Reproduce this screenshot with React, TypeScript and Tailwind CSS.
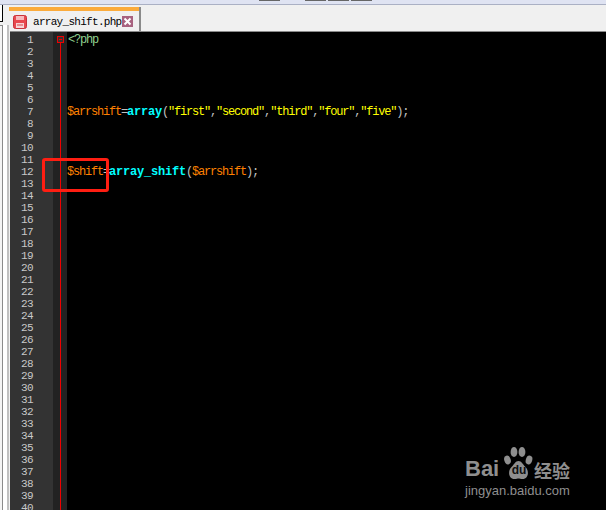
const mono = "font-['Liberation_Mono','DejaVu_Sans_Mono',monospace]";

const lineNumbers = Array.from({ length: 40 }, (_, i) => i + 1);

function TabIcon() {
  return (
    <svg width="14" height="14" viewBox="0 0 14 14" className="shrink-0">
      <rect x="0.5" y="0.5" width="13" height="13" rx="2" fill="#e8494f" stroke="#c8323a" />
      <rect x="3" y="1" width="8" height="4" fill="#f6b9bb" />
      <rect x="3" y="8" width="8" height="5" fill="#f6d5d6" />
      <rect x="4" y="9.500" width="6" height="1" fill="#d9444a" />
    </svg>
  );
}

function CloseIcon() {
  return (
    <svg width="11" height="11" viewBox="0 0 11 11" className="shrink-0">
      <rect width="11" height="11" fill="#a8627f" />
      <path d="M2.500 2.500l6 6M8.500 2.500l-6 6" stroke="#ffffff" strokeWidth="2" />
    </svg>
  );
}

function PawLogo() {
  return (
    <svg width="30" height="36" viewBox="0 0 30 36" className="absolute left-[40px] top-[1px]">
      <ellipse cx="3.500" cy="15" rx="3.200" ry="4.500" fill="#8f8f8f" transform="rotate(-18 3.500 15)" />
      <ellipse cx="10" cy="7" rx="3.400" ry="5" fill="#8f8f8f" />
      <ellipse cx="18" cy="7" rx="3.400" ry="5" fill="#8f8f8f" />
      <ellipse cx="25" cy="15" rx="3.200" ry="4.500" fill="#8f8f8f" transform="rotate(18 25 15)" />
      <path d="M14.500 16c-3 0-4 3-7 6-4 4-3 12 3 12 2 0 3-.6 4-.6s2 .6 4 .6c6 0 7-8 3-12-3-3-4-6-7-6z" fill="#8f8f8f" />
    </svg>
  );
}

function Watermark() {
  return (
    <div className="absolute left-[464px] top-[444px] w-[142px] font-['Liberation_Sans',sans-serif] text-[#8f8f8f]">
      <PawLogo />
      <div className="flex h-[36px] items-end">
        <span className="w-[43px] pl-[1px] text-[22px] leading-[22px] font-bold">Bai</span>
        <span className="relative w-[24px] pb-[4px] text-center text-[12px] leading-[12px] font-bold text-[#111111]">du</span>
        <span className="ml-[3px] font-['Noto_Sans_CJK_SC',sans-serif] text-[18px] leading-[20px] font-bold">经验</span>
      </div>
      <div className="mt-[3px] pl-[1px] text-[13px] leading-[15px]">jingyan.baidu.com</div>
    </div>
  );
}

export default function App() {
  return (
    <div className="relative flex h-[510px] w-[606px] flex-col overflow-hidden bg-[#f0f0f0]">
      <div className="relative h-[5px] shrink-0 border-b border-[#aab0c4] bg-[#dfe3f2]">
        <div className="absolute left-[259px] top-0 h-[1px] w-[21px] bg-[#666666]" />
        <div className="absolute left-[305px] top-0 h-[1px] w-[21px] bg-[#666666]" />
        <div className="absolute left-[328px] top-0 h-[1px] w-[21px] bg-[#666666]" />
        <div className="absolute left-[351px] top-0 h-[1px] w-[21px] bg-[#666666]" />
      </div>

      <div className="flex min-h-0 flex-1">
        <div className="flex w-[10px] shrink-0 flex-col">
          <div className="h-[17px] w-[3px] border-r border-b border-black bg-white" />
          <div className="mt-[3px] flex min-h-0 flex-1">
            <div className="w-[3px] border-t border-r border-[#8a8a8a] bg-[#f4f4f4]" />
            <div className="w-[4px] bg-white" />
            <div className="w-[2px] bg-[#c0c0c0]" />
            <div className="w-[1px] bg-[#f0f0f0]" />
          </div>
        </div>

        <div className="flex min-w-0 flex-1 flex-col">
          <div className="flex h-[26px] shrink-0 items-end">
            <div className="flex h-[24px] w-[131px] flex-col border-r-2 border-[#8a8a8a] bg-[#f0f0f0]">
              <div className="-ml-[1px] h-[4px] bg-[#fbab3c]" />
              <div className="flex flex-1 items-center pl-[3px] pt-[1px]">
                <TabIcon />
                <span className={`ml-[6px] w-[89px] text-[11px] leading-[14px] tracking-[-0.7px] text-black ${mono}`}>array_shift.php</span>
                <CloseIcon />
              </div>
            </div>
          </div>

          <div className="h-[1px] shrink-0 bg-[#8a8a8a]" />
          <div className="flex min-h-0 flex-1 bg-black">
            <div className={`w-[43px] shrink-0 bg-[#333333] pt-[2px] text-right text-[11px] leading-[12px] tracking-[-0.6px] text-[#c8c8c8] ${mono}`}>
              {lineNumbers.map((n) => (
                <div key={n} className="pr-[20px]">{n}</div>
              ))}
            </div>
            <div className="relative w-[14px] shrink-0 bg-[#222222]">
              <div className="absolute left-[7px] top-[10px] bottom-0 w-[1px] bg-[#f00000]" />
              <div className="absolute left-[4px] top-[4px] flex h-[7px] w-[7px] items-center justify-center border border-[#f00000] bg-[#333333]">
                <div className="h-[1px] w-[3px] bg-[#f00000]" />
              </div>
            </div>
            <div className={`min-w-0 flex-1 pt-[2px] text-[12px] leading-[12px] tracking-[-1.2px] whitespace-pre ${mono}`}>
              <div className="pl-[1px] text-[#8fd08f]">{"<?php"}</div>
              <div className="h-[60px]" />
              <div>
                <span className="text-[#ff8000]">$arrshift</span>
                <span className="text-[#c0c0c0]">=</span>
                <span className="font-bold tracking-[-0.2px] text-[#00ffff]">array</span>
                <span className="text-[#c0c0c0]">(</span>
                <span className="text-[#ffff00]">"first"</span>
                <span className="text-[#c0c0c0]">,</span>
                <span className="text-[#ffff00]">"second"</span>
                <span className="text-[#c0c0c0]">,</span>
                <span className="text-[#ffff00]">"third"</span>
                <span className="text-[#c0c0c0]">,</span>
                <span className="text-[#ffff00]">"four"</span>
                <span className="text-[#c0c0c0]">,</span>
                <span className="text-[#ffff00]">"five"</span>
                <span className="text-[#c0c0c0]">);</span>
              </div>
              <div className="h-[48px]" />
              <div>
                <span className="text-[#ff8000]">$shift</span>
                <span className="text-[#c0c0c0]">=</span>
                <span className="font-bold tracking-[-0.2px] text-[#00ffff]">array_shift</span>
                <span className="text-[#c0c0c0]">(</span>
                <span className="text-[#ff8000]">$arrshift</span>
                <span className="text-[#c0c0c0]">);</span>
              </div>
            </div>
          </div>
        </div>
      </div>

      <div className="absolute left-[42px] top-[158px] h-[34px] w-[67px] rounded-[3px] border-[3px] border-[#ff1e12]" />
      <Watermark />
    </div>
  );
}
